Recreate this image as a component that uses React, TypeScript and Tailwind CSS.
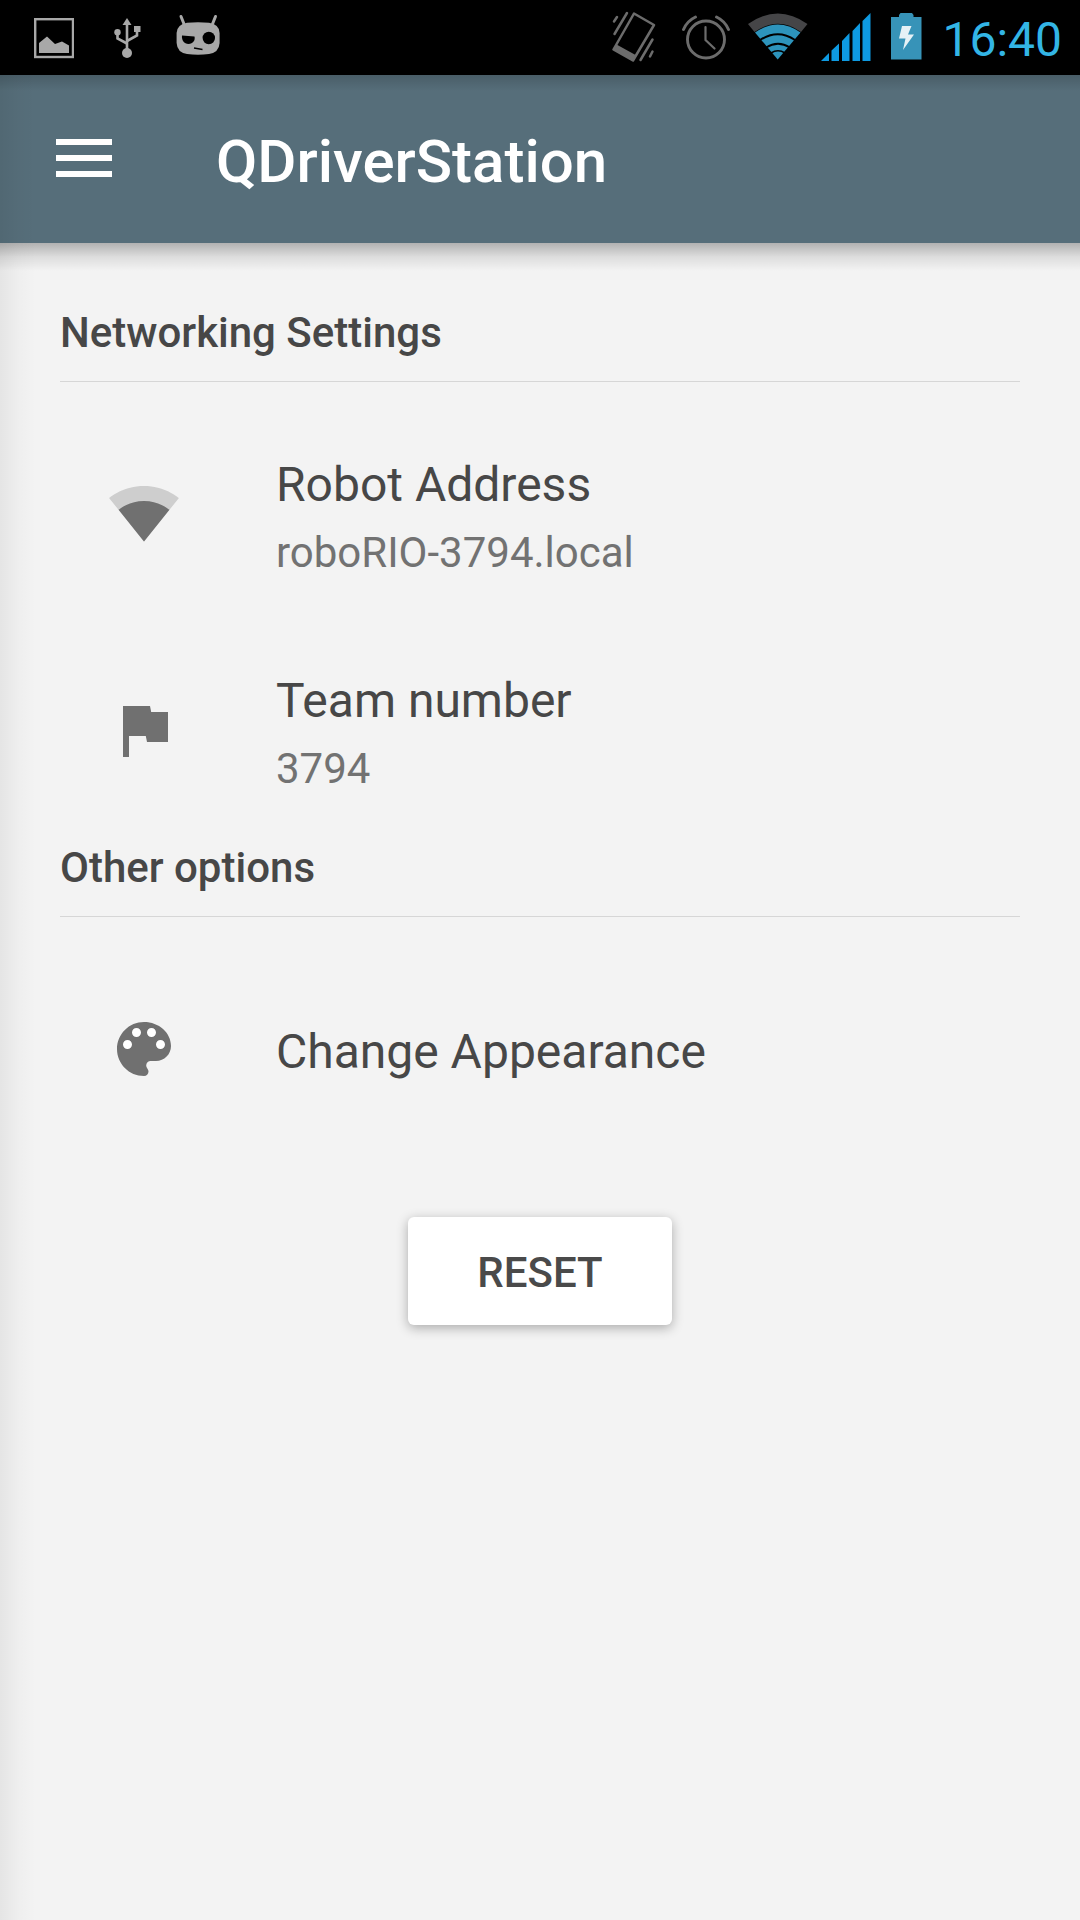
import type { ReactNode } from "react";

function ImageIcon() {
  return (
    <svg className="ml-[34px] h-[75px] w-[40px]" viewBox="34 0 40 75">
      <rect x="35.2" y="19.2" width="37.8" height="37.8" fill="none" stroke="#a8a8a8" strokeWidth="2.4" />
      <path d="M39 53V43L47 36.5L55 44L62 41.5L69 45.5V53Z" fill="#a8a8a8" />
    </svg>
  );
}

function UsbIcon() {
  return (
    <svg className="ml-[40px] h-[75px] w-[28px]" viewBox="114 0 28 75">
      <g fill="none" stroke="#a8a8a8" strokeWidth="2.6">
        <path d="M127 22V52" />
        <path d="M117.5 33V38.5L127 43.5" />
        <path d="M137 30V35.5L127 41" />
      </g>
      <g fill="#a8a8a8">
        <path d="M127 18L131.5 25H122.5Z" />
        <circle cx="117.5" cy="32.3" r="3.2" />
        <rect x="134" y="26" width="6.5" height="6" />
        <circle cx="127" cy="53" r="5" />
      </g>
    </svg>
  );
}

function CyanogenIcon() {
  return (
    <svg className="ml-[34px] h-[75px] w-[44px]" viewBox="176 0 44 75">
      <path d="M181 16.5L184 24M215.5 16.5L212.5 24" stroke="#a8a8a8" strokeWidth="3" strokeLinecap="round" />
      <path d="M187 22.8Q198 21.600 209 22.8Q219.5 24.5 219.6 33V43Q219 52.5 209 54Q198 55.5 187 54Q177.2 52.5 176.6 43V33Q177 24.5 187 22.8Z" fill="#a8a8a8" />
      <path d="M182 35.5L194.5 36.5C195.5 40 193 44 188.5 44S181.5 40 182 35.5Z" fill="#000" />
      <circle cx="208.8" cy="38" r="6.2" fill="#000" />
      <path d="M194 48L202.5 49.5" stroke="#000" strokeWidth="1.3" />
    </svg>
  );
}

function VibrateIcon() {
  return (
    <svg className="h-[75px] w-[44px]" viewBox="612 0 44 75">
      <g fill="none" stroke="#6c6c6c" strokeWidth="2.5" strokeLinecap="round" strokeLinejoin="round">
        <path d="M634 13.5L654 25L633 60.5L613.5 49.5Z" />
        <path d="M617 17L614 21.5M627 13L614.5 34M652.5 39.5L640.5 60M652.5 51.5L650 56.5" />
      </g>
      <path d="M616.5 44.5L636.5 55.5L633 61L613 49.5Z" fill="#6c6c6c" />
    </svg>
  );
}

function AlarmIcon() {
  return (
    <svg className="ml-[26px] h-[75px] w-[48px]" viewBox="682 0 48 75">
      <g fill="none" stroke="#6c6c6c" strokeWidth="2.9" strokeLinecap="round">
        <circle cx="706" cy="39.5" r="18.5" />
        <path d="M705.5 27V40L714.5 48.5" strokeWidth="2.2" />
        <path d="M683.5 29.5Q687 21 695.5 17M716.5 17Q725 21 728.5 29.5" />
      </g>
    </svg>
  );
}

function StatusWifiIcon() {
  return (
    <svg className="ml-[18px] h-[75px] w-[60px]" viewBox="748 0 60 75">
      <path d="M748 24Q778 3 807.5 24L801 32Q778 15.5 754.5 32Z" fill="#454547" />
      <path d="M755 32.5Q778 16.5 800.5 32.5L777.7 59.5Z" fill="#2d94bc" />
      <g fill="none" stroke="#000" strokeWidth="2">
        <path d="M760 40Q778 28.5 795 40" />
        <path d="M766 47.5Q778 40 790 47.5" />
        <path d="M771 53Q778 48.5 785 53" strokeWidth="1.5" />
      </g>
    </svg>
  );
}

function SignalIcon() {
  return (
    <svg className="ml-[13px] h-[75px] w-[50px]" viewBox="821 0 50 75">
      <path d="M821 61L829 53V61ZM831.5 50.5L839 43.5V61H831.5ZM842 41L849.5 33V61H842ZM852.5 31L860 23V61H852.5ZM862.5 21L870.5 13V61H862.5Z" fill="#0e9ae2" />
    </svg>
  );
}

function BatteryIcon() {
  return (
    <svg className="ml-[20px] h-[75px] w-[31px]" viewBox="891 0 31 75">
      <path d="M891 17H899V15L900.5 13H912L913.5 15V17H921.5V59.5H891Z" fill="#3793b8" />
      <path d="M902 26H911.5L908 34.5H914L903 50L905.5 38.5H899Z" fill="#e6f1f6" />
    </svg>
  );
}

function StatusBar() {
  return (
    <div className="flex h-[75px] shrink-0 items-center bg-black">
      <ImageIcon />
      <UsbIcon />
      <CyanogenIcon />
      <div className="ml-auto flex h-[75px] items-center pr-[18px]">
        <VibrateIcon />
        <AlarmIcon />
        <StatusWifiIcon />
        <SignalIcon />
        <BatteryIcon />
        <span className="ml-[18px] w-[122px] pt-[5px] text-right text-[48px] leading-[72px] text-[#33b5e5]">16:40</span>
      </div>
    </div>
  );
}

function SectionTitle({ children }: { children: ReactNode }) {
  return (
    <h2 className="h-[79px] border-b border-[#d6d6d6] text-[42px] leading-[60px] font-medium text-[#474747]">
      {children}
    </h2>
  );
}

function Row({ icon, title, detail }: { icon: ReactNode; title: string; detail?: string }) {
  return (
    <div className="flex h-[216px] items-center pl-12">
      <svg className="mr-24 size-[72px] shrink-0" viewBox="0 0 24 24" fill="#707070">
        {icon}
      </svg>
      <div className={detail ? "pt-[9px]" : "pt-[5px]"}>
        <div className="text-[48px] leading-[60px] text-[#474747]">{title}</div>
        {detail && <div className="mt-[11px] text-[42px] leading-[54px] text-[#727272]">{detail}</div>}
      </div>
    </div>
  );
}

export default function App() {
  return (
    <div className="flex h-[1920px] w-[1080px] flex-col overflow-hidden bg-[#f3f3f3] font-[Roboto,sans-serif]">
      <StatusBar />
      <div className="relative flex grow flex-col">
        <header className="relative flex h-[168px] shrink-0 items-center bg-[#566e7a] pl-14">
          <button className="mb-0.5 flex w-14 flex-col gap-2.5" aria-label="Menu">
            <span className="h-1.5 bg-white" />
            <span className="h-1.5 bg-white" />
            <span className="h-1.5 bg-white" />
          </button>
          <h1 className="ml-[104px] pt-1.5 text-[60px] leading-[72px] font-medium text-white">QDriverStation</h1>
          <div className="pointer-events-none absolute inset-x-0 top-full h-7 bg-linear-to-b from-black/27 via-black/9 to-transparent" />
        </header>
        <main className="flex grow flex-col px-[60px] pt-[60px]">
          <SectionTitle>Networking Settings</SectionTitle>
          <div className="pt-[23px] pb-px">
            <Row
              title="Robot Address"
              detail="roboRIO-3794.local"
              icon={
                <>
                  <path fill="#cecece" d="M12.01 21.49L23.64 7c-.45-.34-4.93-4-11.64-4C5.28 3 .81 6.66.36 7l11.63 14.49.01.01.01-.01z" />
                  <path d="M3.53 10.95l8.46 10.54.01.01.01-.01 8.46-10.54C20.04 10.62 16.81 8 12 8c-4.81 0-8.04 2.62-8.47 2.95z" />
                </>
              }
            />
            <Row
              title="Team number"
              detail="3794"
              icon={<path transform="translate(0 .33)" d="M14.4 6L14 4H5v17h2v-7h5.6l.4 2h7V6z" />}
            />
          </div>
          <SectionTitle>Other options</SectionTitle>
          <div className="pt-6">
            <Row
              title="Change Appearance"
              icon={
                <>
                  <path fill="#fff" d="M4.8 8.800h14.400v3.400H4.800zM7.800 4.800h8.400v3.400H7.800z" />
                  <path d="M12 3c-4.97 0-9 4.03-9 9s4.03 9 9 9c.83 0 1.5-.67 1.5-1.5 0-.39-.15-.74-.39-1.01-.23-.26-.38-.61-.38-.99 0-.83.67-1.5 1.5-1.5H16c2.76 0 5-2.24 5-5 0-4.42-4.03-8-9-8zm-5.5 9c-.83 0-1.5-.67-1.5-1.5S5.67 9 6.5 9 8 9.67 8 10.5 7.33 12 6.5 12zm3-4C8.67 8 8 7.33 8 6.5S8.67 5 9.500 5s1.5.67 1.5 1.5S10.33 8 9.5 8zm5 0c-.83 0-1.5-.67-1.5-1.5S13.67 5 14.5 5s1.5.67 1.5 1.5S15.33 8 14.5 8zm3 4c-.83 0-1.5-.67-1.5-1.5S16.67 9 17.5 9s1.5.67 1.5 1.5-.67 1.5-1.5 1.5z" />
                </>
              }
            />
          </div>
          <button className="mt-[60px] h-[108px] w-[264px] self-center rounded-[6px] bg-white pt-1 text-[42px] leading-[60px] font-medium text-[#4a4a4a] shadow-[0_3px_12px_rgba(0,0,0,0.3)]">
            RESET
          </button>
        </main>
        <div className="pointer-events-none absolute inset-y-0 left-0 w-9 bg-linear-to-r from-black/6 via-black/2 to-transparent" />
        <div className="pointer-events-none absolute inset-x-0 top-0 h-4 bg-linear-to-b from-black/15 to-transparent" />
      </div>
    </div>
  );
}
